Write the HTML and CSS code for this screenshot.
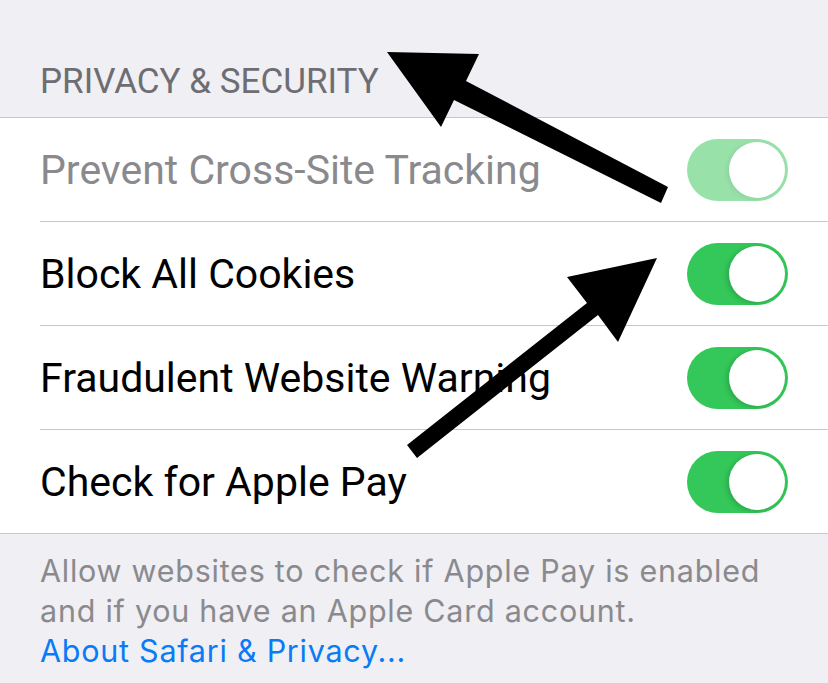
FILE: index.html
```html
<!DOCTYPE html>
<html lang="en">
<head>
<meta charset="utf-8">
<title>Privacy &amp; Security</title>
<link rel="stylesheet" href="styles.css">
</head>
<body>
<div class="screen">
  <div class="section-header">PRIVACY &amp; SECURITY</div>
  <ul class="group">
    <li class="row">
      <div class="row-inner">
        <span class="label dim">Prevent Cross-Site Tracking</span>
        <span class="switch on disabled"><span class="knob"></span></span>
      </div>
    </li>
    <li class="row">
      <div class="row-inner">
        <span class="label">Block All Cookies</span>
        <span class="switch on"><span class="knob"></span></span>
      </div>
    </li>
    <li class="row">
      <div class="row-inner">
        <span class="label">Fraudulent Website Warning</span>
        <span class="switch on"><span class="knob"></span></span>
      </div>
    </li>
    <li class="row last">
      <div class="row-inner">
        <span class="label">Check for Apple Pay</span>
        <span class="switch on"><span class="knob"></span></span>
      </div>
    </li>
  </ul>
  <div class="section-footer">
    <p>Allow websites to check if Apple Pay is enabled and if you have an Apple Card account.</p>
    <a class="link" href="#">About Safari &amp; Privacy...</a>
  </div>
  <svg class="arrows" viewBox="0 0 828 683" width="828" height="683" aria-hidden="true">
    <polygon points="387,52 479,54 466,81 668,187 661,203 454,100 441,127" fill="#000"/>
    <polygon points="657,258 618,342 598,315 417,458 407,445 587,303 567,277" fill="#000"/>
  </svg>
</div>
</body>
</html>
```
FILE: styles.css
```css
* { box-sizing: border-box; }
html, body {
  margin: 0;
  padding: 0;
  background: #efeff4;
}
.screen {
  position: relative;
  width: 828px;
  height: 683px;
  overflow: hidden;
  font-family: Roboto, "Liberation Sans", sans-serif;
  background: #efeff4;
}
.section-header {
  height: 117px;
  padding: 0 40px;
  display: flex;
  align-items: flex-end;
  padding-bottom: 15px;
  font-size: 35px;
  line-height: 40px;
  color: #6d6d72;
}
.group {
  list-style: none;
  margin: 0;
  padding: 0;
  background: #fff;
  border-top: 1px solid #c8c7cc;
  border-bottom: 1px solid #c8c7cc;
}
.row {
  padding-left: 40px;
}
.row-inner {
  height: 104px;
  display: flex;
  align-items: center;
  justify-content: space-between;
  padding-right: 40px;
  border-bottom: 1px solid #c8c7cc;
}
.row.last .row-inner {
  height: 103px;
  border-bottom: none;
}
.label {
  font-size: 41px;
  color: #000;
}
.label.dim {
  color: #8a8a8e;
}
.switch {
  position: relative;
  width: 101px;
  height: 62px;
  border-radius: 31px;
  background: #e9e9ea;
  flex-shrink: 0;
}
.switch.on {
  background: #34c759;
}
.switch.disabled {
  background: #98e2aa;
}
.knob {
  position: absolute;
  top: 3px;
  right: 3px;
  width: 56px;
  height: 56px;
  border-radius: 50%;
  background: #fff;
  box-shadow: -2px 1px 5px rgba(0, 0, 0, 0.18);
}
.switch.disabled .knob {
  box-shadow: -2px 1px 5px rgba(0, 0, 0, 0.08);
}
.section-footer {
  padding: 17px 40px 0;
  font-family: Inter, Roboto, sans-serif;
  font-size: 30.5px;
  line-height: 40px;
  letter-spacing: 0.75px;
  color: #8a8a8e;
}
.section-footer p {
  margin: 0;
}
.link {
  color: #0a7bf6;
  text-decoration: none;
}
.arrows {
  position: absolute;
  left: 0;
  top: 0;
  pointer-events: none;
}
```
